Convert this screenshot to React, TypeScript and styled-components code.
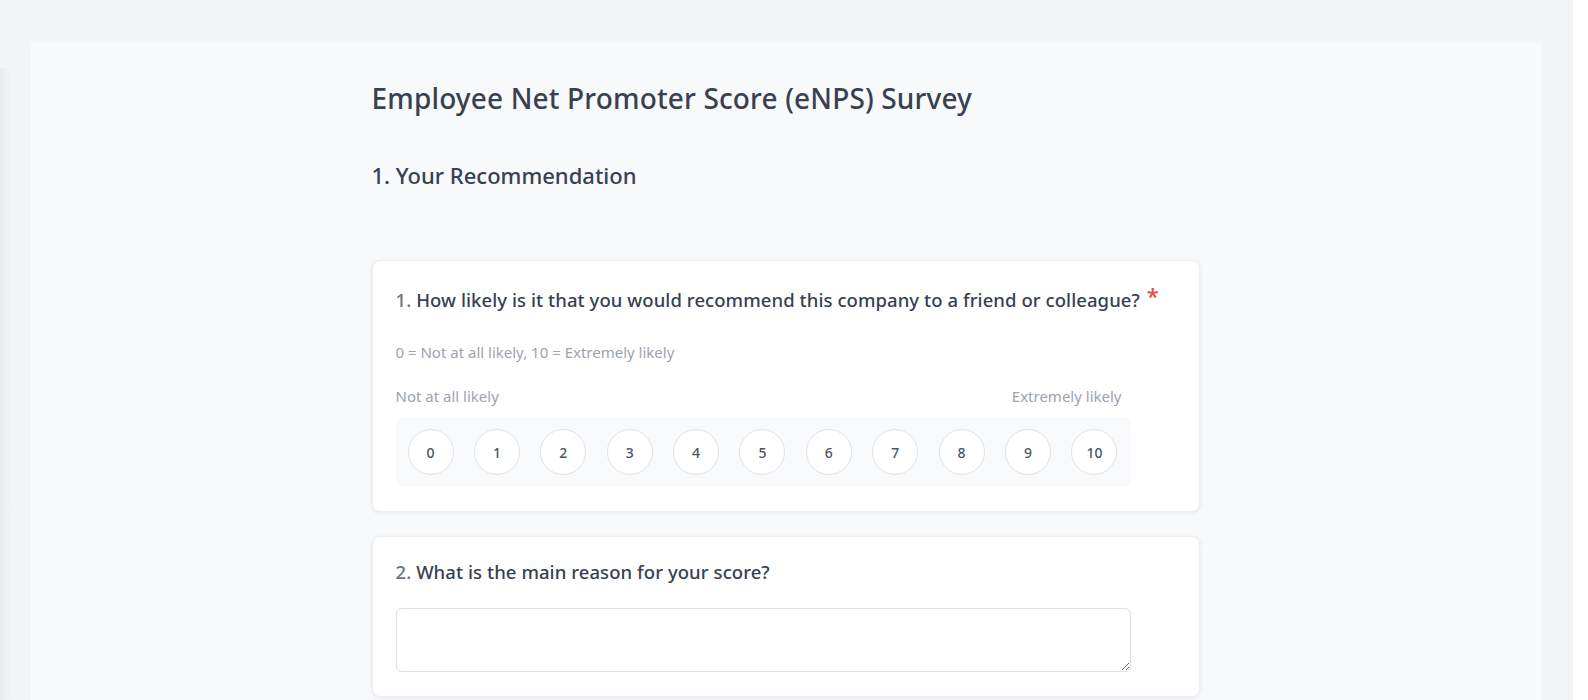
import * as React from 'react';
import styled, { createGlobalStyle } from 'styled-components';

const GlobalStyle = createGlobalStyle`
  html {
    background: #ffffff;
  }
  body {
    margin: 0;
    padding-right: 15px;
    font-family: "Noto Sans", "Open Sans", Arial, sans-serif;
    color: #374151;
  }
  * {
    box-sizing: border-box;
  }
`;

const Page = styled.div`
  min-height: 700px;
  padding: 43px 31px 0;
  background:
    linear-gradient(to right, #e9ebee, rgba(243, 244, 246, 0)) no-repeat 0 68px / 12px 100%,
    #f3f4f6;
`;

const Panel = styled.main`
  min-height: 657px;
  background: #f8f9fb;
  padding: 37px 25px 0 23px;
`;

const Column = styled.div`
  max-width: 828px;
  margin: 0 auto;
`;

const Title = styled.h1`
  margin: 0;
  font-size: 28px;
  line-height: 36px;
  font-weight: 500;
  letter-spacing: 0.15px;
  color: #374151;
`;

const SectionTitle = styled.h2`
  margin: 45px 0 0;
  font-size: 22px;
  line-height: 29px;
  font-weight: 500;
  color: #374151;
`;

const Questions = styled.div`
  display: flex;
  flex-direction: column;
  gap: 24px;
  margin-top: 70px;
`;

const Card = styled.section<{ $top?: number }>`
  background: #ffffff;
  border: 1px solid #eceef1;
  border-radius: 8px;
  box-shadow: 0 1px 4px rgba(17, 24, 39, 0.08);
  padding: ${(p) => p.$top ?? 23}px 23px 24px;
`;

const Question = styled.div<{ $required?: boolean }>`
  font-size: 18.5px;
  letter-spacing: 0.07px;
  line-height: ${(p) => (p.$required ? '28px' : '26px')};
  font-weight: 500;
  color: #374151;
`;

const Num = styled.span`
  color: #6b7280;
`;

const Star = styled.span`
  color: #ef4444;
  font-size: 22px;
  line-height: 1;
  margin-left: 7px;
  vertical-align: 3px;
`;

const Hint = styled.p`
  margin: 27px 0 0;
  font-size: 15px;
  line-height: 22px;
  color: #9ca3af;
`;

const ScaleWrap = styled.div`
  margin-top: 22px;
  max-width: 735px;
`;

const ScaleLabels = styled.div`
  display: flex;
  justify-content: space-between;
  padding-right: 9px;
  font-size: 15px;
  line-height: 22px;
  color: #9ca3af;
`;

const Scale = styled.div`
  margin-top: 10px;
  display: flex;
  gap: 20.4px;
  padding: 12px;
  background: #f9fafb;
  border-radius: 8px;
`;

const Choice = styled.button`
  width: 46px;
  height: 46px;
  flex: 0 0 46px;
  border-radius: 50%;
  border: 1px solid #dfe2e6;
  background: #ffffff;
  font-family: inherit;
  font-size: 14px;
  font-weight: 500;
  color: #4b5563;
  padding: 0;
  cursor: pointer;
`;

const Answer = styled.textarea`
  display: block;
  width: 100%;
  max-width: 735px;
  height: 64px;
  margin-top: 23px;
  border: 1px solid #dcdfe4;
  border-radius: 6px;
  background: #ffffff;
  font-family: inherit;
  font-size: 14px;
  padding: 8px 12px;
`;

export default function App() {
  return (
    <>
      <GlobalStyle />
      <Page>
        <Panel>
          <Column>
            <Title>Employee Net Promoter Score (eNPS) Survey</Title>
            <SectionTitle>1. Your Recommendation</SectionTitle>
            <Questions>
              <Card>
                <Question $required>
                  <Num>1.</Num> How likely is it that you would recommend this company to a friend or colleague?
                  <Star>*</Star>
                </Question>
                <Hint>0 = Not at all likely, 10 = Extremely likely</Hint>
                <ScaleWrap>
                  <ScaleLabels>
                    <span>Not at all likely</span>
                    <span>Extremely likely</span>
                  </ScaleLabels>
                  <Scale>
                    {Array.from({ length: 11 }, (_, i) => (
                      <Choice key={i}>{i}</Choice>
                    ))}
                  </Scale>
                </ScaleWrap>
              </Card>
              <Card $top={22}>
                <Question>
                  <Num>2.</Num> What is the main reason for your score?
                </Question>
                <Answer />
              </Card>
            </Questions>
          </Column>
        </Panel>
      </Page>
    </>
  );
}
